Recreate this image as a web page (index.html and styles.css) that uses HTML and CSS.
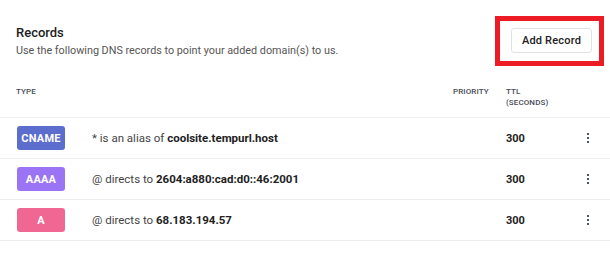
FILE: index.html
```html
<!DOCTYPE html>
<html lang="en">
<head>
<meta charset="utf-8">
<title>Records</title>
<link rel="stylesheet" href="styles.css">
</head>
<body>
<div class="page">
  <header class="head">
    <div class="head-text">
      <h2 class="title">Records</h2>
      <p class="subtitle">Use the following DNS records to point your added domain(s) to us.</p>
    </div>
    <div class="action">
      <button class="btn">Add Record</button>
      <span class="highlight"></span>
    </div>
  </header>
  <div class="table">
    <div class="row row-head">
      <div class="th">Type</div>
      <div class="th"></div>
      <div class="th">Priority</div>
      <div class="th">TTL<br>(Seconds)</div>
      <div class="th"></div>
    </div>
    <div class="row">
      <div class="cell"><span class="badge badge-cname">CNAME</span></div>
      <div class="cell content">* is an alias of <b>coolsite.tempurl.host</b></div>
      <div class="cell"></div>
      <div class="cell ttl">300</div>
      <div class="cell"><span class="kebab"><i></i><i></i><i></i></span></div>
    </div>
    <div class="row">
      <div class="cell"><span class="badge badge-aaaa">AAAA</span></div>
      <div class="cell content">@ directs to <b>2604:a880:cad:d0::46:2001</b></div>
      <div class="cell"></div>
      <div class="cell ttl">300</div>
      <div class="cell"><span class="kebab"><i></i><i></i><i></i></span></div>
    </div>
    <div class="row">
      <div class="cell"><span class="badge badge-a">A</span></div>
      <div class="cell content">@ directs to <b>68.183.194.57</b></div>
      <div class="cell"></div>
      <div class="cell ttl">300</div>
      <div class="cell"><span class="kebab"><i></i><i></i><i></i></span></div>
    </div>
  </div>
</div>
</body>
</html>
```

FILE: styles.css
```css
* { box-sizing: border-box; }
html, body { margin: 0; padding: 0; background: #fff; }
body {
  font-family: Roboto, "Liberation Sans", Arial, sans-serif;
  color: #222;
}
.page { width: 610px; }
.head {
  display: flex;
  justify-content: space-between;
  align-items: flex-start;
  padding: 25px 18px 0 16px;
  height: 80px;
}
.title {
  margin: 0;
  font-size: 13px;
  line-height: 16px;
  font-weight: 500;
  color: #1e1e1e;
}
.subtitle {
  margin: 3px 0 0;
  font-size: 10.8px;
  line-height: 14px;
  color: #555;
}
.action {
  position: relative;
  margin-top: 3px;
}
.btn {
  display: block;
  width: 81px;
  height: 25px;
  padding: 0;
  border: 1px solid #e2e2e2;
  border-radius: 3px;
  background: #fff;
  font-family: inherit;
  font-size: 11px;
  font-weight: 500;
  letter-spacing: 0.2px;
  color: #222;
}
.highlight {
  position: absolute;
  left: -16px;
  top: -12px;
  width: 109px;
  height: 50px;
  border: 5px solid #ed1c24;
  pointer-events: none;
}
.table { border-bottom: 1px solid #eeeeee; }
.row {
  display: grid;
  grid-template-columns: 92px 361px 53px 70px 24px;
  align-items: center;
  height: 41px;
  border-top: 1px solid #eeeeee;
}
.row-head {
  height: 37px;
  padding-top: 6px;
  border-top: none;
  align-items: start;
}
.th {
  font-size: 8px;
  line-height: 11px;
  font-weight: 500;
  text-transform: uppercase;
  color: #4a4a58;
  letter-spacing: 0.1px;
}
.th:first-child { padding-left: 16px; }
.cell:first-child { padding-left: 17px; }
.badge {
  display: flex;
  align-items: center;
  justify-content: center;
  width: 48px;
  height: 24px;
  border-radius: 3px;
  color: #fff;
  font-size: 11px;
  font-weight: 700;
  letter-spacing: 0.2px;
}
.badge-cname { background: #5b6dcd; }
.badge-aaaa { background: #9a74f4; }
.badge-a { background: #f06794; }
.content {
  font-size: 11.5px;
  color: #444;
}
.content b { font-weight: 700; color: #222; }
.ttl {
  font-size: 11px;
  font-weight: 700;
  color: #222;
}
.kebab {
  display: flex;
  flex-direction: column;
  align-items: center;
  gap: 2px;
  width: 24px;
}
.kebab i {
  display: block;
  width: 2px;
  height: 2px;
  background: #4b5563;
}
```
